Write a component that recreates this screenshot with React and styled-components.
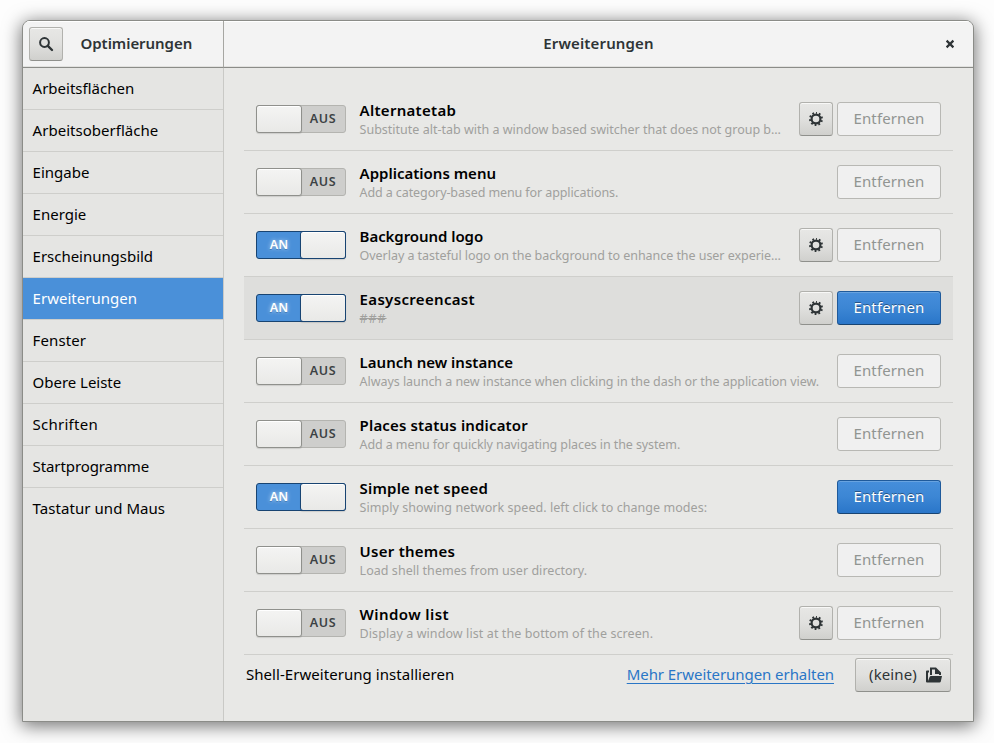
import React from "react";
import styled, { createGlobalStyle, css } from "styled-components";

const GlobalStyle = createGlobalStyle`
  *, *::before, *::after { box-sizing: border-box; }
  body {
    margin: 0;
    background: #fdfdfd;
    color: #000;
    font-family: "Noto Sans", "Open Sans", sans-serif;
    font-size: 15px;
    line-height: 20px;
  }
  button { font: inherit; }
`;

const Desktop = styled.div`
  height: 743px;
  padding: 20px 20px 21px 22px;
  overflow: hidden;
`;

const Window = styled.main`
  width: 952px;
  height: 702px;
  display: grid;
  grid-template: 47px 1fr / 201px 1fr;
  border: 1px solid #8b8c88;
  border-radius: 8px 8px 0 0;
  background: #e8e8e6;
  overflow: hidden;
  box-shadow: 0 3px 18px 1px rgba(0, 0, 0, 0.55);
`;

const HeaderPart = styled.header`
  display: flex;
  align-items: center;
  height: 47px;
  background: #f3f3f3;
  border-bottom: 1px solid #8b8c88;
  box-shadow: inset 0 1px #fff, inset 0 -1px #e1e1df;
`;

const SideHeader = styled(HeaderPart)`
  padding: 0 0 1px 6px;
  border-right: 1px solid #a6a6a2;
`;

const MainHeader = styled(HeaderPart)`
  position: relative;
  justify-content: center;
  padding-bottom: 1px;
`;

const Heading = styled.h1`
  margin: 0;
  padding-bottom: 2px;
  color: #2e3436;
  font-size: 15px;
  font-weight: 600;
  letter-spacing: ${(p) => p.$track}px;
`;

const SideHeading = styled(Heading)`
  margin-left: 17.5px;
`;

const CloseButton = styled.button`
  position: absolute;
  right: 15px;
  top: 15px;
  width: 16px;
  height: 16px;
  display: grid;
  place-items: center;
  border: 0;
  padding: 0;
  background: none;
`;

const raised = css`
  border: 1px solid #b1b1ad;
  border-bottom-color: #8f908c;
  border-radius: 3px;
  background: linear-gradient(#e7e7e5, #e0e0de 50%, #d0d0cd);
  box-shadow: inset 0 1px #f8f8f7;
  color: #2e3436;
`;

const IconButton = styled.button`
  ${raised}
  width: 34px;
  height: 34px;
  flex: none;
  display: grid;
  place-items: center;
  padding: 0;
`;

const Sidebar = styled.nav`
  background: #e5e5e3;
  border-right: 1px solid #c9c9c6;
`;

const SideItem = styled.div`
  height: 42px;
  padding: 10px 9px 0 9.6px;
  border-bottom: 1px solid ${(p) => (p.$last ? "transparent" : "#cececb")};
  letter-spacing: ${(p) => p.$track}px;
  white-space: nowrap;
  ${(p) => p.$selected && css`
    background: #4a90d9;
    color: #fff;
  `}
`;

const Content = styled.section`
  padding: 20px;
`;

const Row = styled.article`
  height: 63px;
  display: flex;
  align-items: center;
  padding: 0 12px;
  border-bottom: 1px solid #cfcfcc;
  background: ${(p) => (p.$hover ? "#dededc" : "transparent")};
`;

const Track = styled.div`
  width: 90px;
  height: 28px;
  flex: none;
  display: flex;
  justify-content: ${(p) => (p.$on ? "flex-end" : "flex-start")};
  border: 1px solid ${(p) => (p.$on ? "#184472" : "#b4b4b0")};
  border-radius: 3px;
  background: ${(p) => (p.$on ? "#4a90d9" : "#cececc")};
`;

const Knob = styled.span`
  width: 46px;
  height: 28px;
  margin: -1px;
  border: 1px solid ${(p) => (p.$on ? "#184472" : "#8f908c")};
  border-radius: 3px;
  background: linear-gradient(#f4f4f3, #e9e9e7);
  box-shadow: inset 0 1px #fff, 0 1px 1px rgba(0, 0, 0, 0.12);
`;

const SwitchLabel = styled.span`
  flex: 1;
  text-align: center;
  font-size: 12.5px;
  font-weight: 600;
  line-height: 25px;
  letter-spacing: ${(p) => (p.$on ? 0.2 : 0.6)}px;
  color: ${(p) => (p.$on ? "#fff" : "#3c4244")};
  text-shadow: ${(p) => (p.$on ? "0 0 4px rgba(255,255,255,.7), 0 1px #2a6cb0" : "none")};
`;

const Info = styled.div`
  flex: 1;
  min-width: 0;
  padding: 0 0 1px 13.6px;
`;

const Name = styled.h2`
  margin: 0 0 1px;
  font-size: 15px;
  font-weight: 600;
  line-height: 20px;
  letter-spacing: ${(p) => p.$track}px;
  white-space: nowrap;
`;

const Description = styled.p`
  margin: 0;
  color: #a0a09d;
  font-size: 12.5px;
  line-height: 17px;
  letter-spacing: ${(p) => p.$track}px;
  white-space: nowrap;
  text-decoration: ${(p) => (p.$struck ? "line-through" : "none")};
`;

const Actions = styled.div`
  display: flex;
  gap: 4px;
`;

const RemoveButton = styled.button`
  width: 104px;
  height: 34px;
  padding: 0 0 2px;
  border: 1px solid #b8b8b4;
  border-radius: 3px;
  background: #f0f0f0;
  color: #919592;
  letter-spacing: 0.13px;
  ${(p) => p.$active && css`
    border-color: #1f5a9b;
    border-bottom-color: #184472;
    background: linear-gradient(#468edb, #3c86d4 50%, #2a76c9);
    box-shadow: inset 0 1px #68a3e0;
    color: #fff;
    text-shadow: 0 -1px rgba(0, 0, 0, 0.4);
  `}
`;

const Footer = styled.footer`
  height: 40px;
  display: flex;
  align-items: center;
  padding: 0 2px;
`;

const InstallLabel = styled.span`
  flex: 1;
  padding-bottom: 3px;
  letter-spacing: 0.05px;
`;

const MoreLink = styled.a`
  margin-right: 21px;
  padding-bottom: 3px;
  color: #2a76c6;
  letter-spacing: -0.06px;
  text-decoration: underline;
  text-decoration-thickness: 1px;
  text-underline-offset: 3px;
`;

const FileButton = styled.button`
  ${raised}
  width: 96px;
  height: 34px;
  display: flex;
  align-items: center;
  gap: 9px;
  padding: 0 0 0 13px;
  letter-spacing: 0.13px;
  white-space: nowrap;
`;

const FileLabel = styled.span`
  padding-bottom: 2px;
`;

const SearchIcon = () => (
  <svg width="16" height="16" viewBox="0 0 16 16" fill="none" stroke="#2e3436">
    <circle cx="6.5" cy="6.5" r="4.4" strokeWidth="2" />
    <path d="M9.8 9.8 L14 14" strokeWidth="2.4" strokeLinecap="round" />
  </svg>
);

const CloseIcon = () => (
  <svg width="16" height="16" viewBox="0 0 16 16" fill="none" stroke="#2e3436">
    <path d="M4.6 4.6 L11.4 11.4 M11.4 4.6 L4.6 11.4" strokeWidth="2.2" />
  </svg>
);

const GearIcon = () => (
  <svg width="16" height="16" viewBox="0 0 16 16" fill="none" stroke="#2e3436">
    <circle cx="8" cy="8" r="4.4" strokeWidth="2.2" />
    <circle cx="8" cy="8" r="6" strokeWidth="2" strokeDasharray="1.77 2" strokeDashoffset="0.885" transform="rotate(-90 8 8)" />
  </svg>
);

const OpenIcon = () => (
  <svg width="16" height="16" viewBox="0 0 16 16" fill="#2e3436">
    <path d="M3 3.5 H1 Q0 3.5 0 4.5 V14.5 Q0 15.5 1 15.5 H13.5 Q14.5 15.5 14.8 14.5 L16 9 H5 Q4 9 3.6 10 L2 14 V5.5 H3 Z" />
    <path d="M4 0.5 H10 L15 5.5 V8 H13 V7 H9 V2.5 H6 V8 H4 Z" />
  </svg>
);

const sections = [
  ["Arbeitsflächen", 0],
  ["Arbeitsoberfläche", 0.02],
  ["Eingabe", 0],
  ["Energie", 0],
  ["Erscheinungsbild", -0.03],
  ["Erweiterungen", 0.02],
  ["Fenster", 0.1],
  ["Obere Leiste", -0.03],
  ["Schriften", 0.25],
  ["Startprogramme", -0.1],
  ["Tastatur und Maus", 0.06],
];

const extensions = [
  { name: "Alternatetab", nt: 0.28, text: "Substitute alt-tab with a window based switcher that does not group b…", dt: 0, gear: true },
  { name: "Applications menu", nt: 0, text: "Add a category-based menu for applications.", dt: -0.1 },
  { name: "Background logo", nt: -0.06, text: "Overlay a tasteful logo on the background to enhance the user experie…", dt: -0.045, gear: true, on: true },
  { name: "Easyscreencast", nt: 0.33, text: "###", dt: 0.9, gear: true, on: true, removable: true, hover: true, struck: true },
  { name: "Launch new instance", nt: 0, text: "Always launch a new instance when clicking in the dash or the application view.", dt: -0.05 },
  { name: "Places status indicator", nt: 0.16, text: "Add a menu for quickly navigating places in the system.", dt: -0.1 },
  { name: "Simple net speed", nt: 0.2, text: "Simply showing network speed. left click to change modes:", dt: 0.05, on: true, removable: true },
  { name: "User themes", nt: 0.25, text: "Load shell themes from user directory.", dt: 0.04 },
  { name: "Window list", nt: 0.42, text: "Display a window list at the bottom of the screen.", dt: 0.09, gear: true },
];

const Switch = ({ on }) => (
  <Track $on={on} role="switch" aria-checked={!!on}>
    {on && <SwitchLabel $on>AN</SwitchLabel>}
    <Knob $on={on} />
    {!on && <SwitchLabel>AUS</SwitchLabel>}
  </Track>
);

const ExtensionRow = ({ ext }) => (
  <Row $hover={ext.hover}>
    <Switch on={ext.on} />
    <Info>
      <Name $track={ext.nt}>{ext.name}</Name>
      <Description $track={ext.dt} $struck={ext.struck}>{ext.text}</Description>
    </Info>
    <Actions>
      {ext.gear && <IconButton aria-label="Einstellungen"><GearIcon /></IconButton>}
      <RemoveButton $active={ext.removable}>Entfernen</RemoveButton>
    </Actions>
  </Row>
);

export default function App() {
  return (
    <Desktop>
      <GlobalStyle />
      <Window>
        <SideHeader>
          <IconButton aria-label="Suchen"><SearchIcon /></IconButton>
          <SideHeading $track={-0.05}>Optimierungen</SideHeading>
        </SideHeader>
        <MainHeader>
          <Heading $track={0.15}>Erweiterungen</Heading>
          <CloseButton aria-label="Schließen"><CloseIcon /></CloseButton>
        </MainHeader>
        <Sidebar>
          {sections.map(([label, track], i) => (
            <SideItem key={label} $track={track} $selected={i === 5} $last={i === sections.length - 1}>
              {label}
            </SideItem>
          ))}
        </Sidebar>
        <Content>
          {extensions.map((ext) => <ExtensionRow key={ext.name} ext={ext} />)}
          <Footer>
            <InstallLabel>Shell-Erweiterung installieren</InstallLabel>
            <MoreLink>Mehr Erweiterungen erhalten</MoreLink>
            <FileButton><FileLabel>(keine)</FileLabel><OpenIcon /></FileButton>
          </Footer>
        </Content>
      </Window>
    </Desktop>
  );
}
